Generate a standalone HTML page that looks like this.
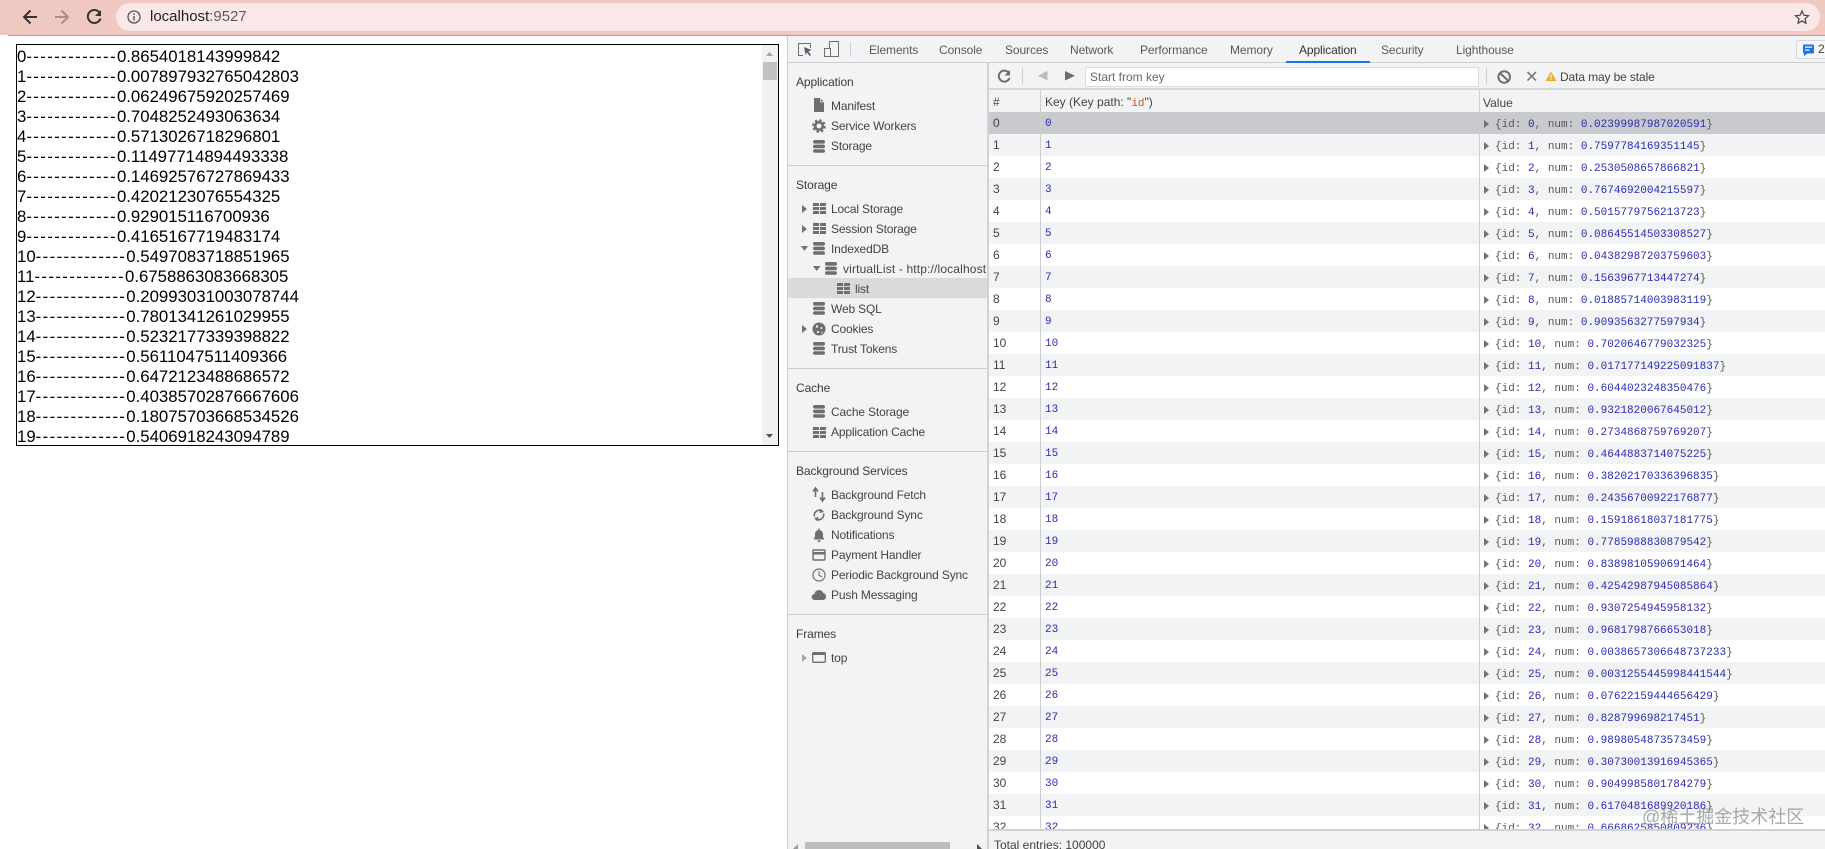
<!DOCTYPE html>
<html><head><meta charset="utf-8"><title>localhost:9527</title>
<style>
*{box-sizing:border-box}
html,body{margin:0;padding:0;width:1825px;height:849px;overflow:hidden;background:#fff;font-family:"Liberation Sans",sans-serif}
.a{position:absolute}
#bar{left:0;top:0;width:1825px;height:35px;background:#efc8c1}
#line{left:8px;top:35px;width:1817px;height:1px;background:#b89e99}
#omni{left:116px;top:3px;width:1704px;height:28px;border-radius:14px;background:#f9e8e7}
#url{left:150px;top:8px;font-size:15px;line-height:18px;color:#202124}
#url span{color:#5f5a5a}
#box{left:16px;top:44px;width:763px;height:402px;border:1px solid #000;overflow:hidden;background:#fff}
#list{position:absolute;left:0;top:2px;font-size:16.8px;line-height:20px;color:#000;white-space:nowrap}
#list div{height:20px}
#list span{letter-spacing:1.38px}
#sb{position:absolute;right:0;top:0;width:16px;height:400px;background:#f1f1f1}
#th{position:absolute;right:1px;top:17px;width:14px;height:18px;background:#c1c1c1}
#dev{left:787px;top:36px;width:1038px;height:813px;background:#f1f3f4;border-left:1px solid #cbcdd1}
.tab{position:absolute;top:42px;font-size:12px;line-height:16px;color:#5a5a5a;white-space:nowrap;letter-spacing:-.1px}
#tabline{left:788px;top:62px;width:1037px;height:1px;background:#cbcdd1}
#under{left:1286px;top:61px;width:84px;height:2px;background:#1a73e8}
#side{left:987px;top:63px;width:2px;height:786px;background:#d0d2d6}
.d{position:absolute;left:788px;width:199px;height:1px;background:#cbcdd1}
.h,.t{position:absolute;font-size:12px;line-height:16px;height:16px;white-space:nowrap;color:#444}
.h{left:796px;color:#3c3c3c;letter-spacing:-.1px}
.t{left:831px;letter-spacing:-.16px}
#sel{left:788px;top:278px;width:199px;height:20px;background:#dadada}
#vl{left:843px;width:143px;overflow:hidden;letter-spacing:.15px}
#inp{left:1085px;top:67px;width:394px;height:20px;background:#fff;border:1px solid #dadce0;font-size:12px;line-height:18px;color:#6a6a6a;padding-left:4px}
#tb2{left:989px;top:88px;width:836px;height:2px;background:#d5d7da}
#hd{left:989px;top:90px;width:836px;height:22px;background:#f1f3f4}
#grid{left:989px;top:112px;width:836px;height:717px;overflow:hidden;background:#fff}
.r{position:relative;height:22px;font-size:12px;line-height:22px;color:#444;white-space:nowrap}
.r:nth-child(even){background:#f1f3f4}
.r.s{background:#c8cacd}
.r b,.r i,.r u{position:absolute;font-weight:normal;font-style:normal;text-decoration:none}
.r b{left:4px;font-size:12px;top:0}
.r i{left:56px;font-family:"Liberation Mono",monospace;font-size:11px;color:#2a2ab0;top:1px}
.r u{left:506px;top:2px;font-family:"Liberation Mono",monospace;font-size:11px;color:#565656}
.r u em{font-style:normal;color:#2a2ab0}
.r s{position:absolute;left:495px;top:8px;width:0;height:0;border-left:5px solid #727272;border-top:4px solid transparent;border-bottom:4px solid transparent}
.cv{position:absolute;top:90px;width:1px;height:739px;background:#cbcdd1}
#foot{left:989px;top:829px;width:836px;height:20px;background:#f1f3f4;border-top:2px solid #d0d2d6;font-size:12px;line-height:29px;color:#444;padding-left:5px;overflow:hidden}
.hh{position:absolute;top:94px;font-size:12px;line-height:16px;color:#444;white-space:nowrap}
.hh span{font-family:"Liberation Mono",monospace;font-size:11px;color:#c5571f}
#badge{left:1796px;top:40px;width:29px;height:19px;border:1px solid #d6d8db;border-right:0;border-radius:2px 0 0 2px;background:#f5f6f7;font-size:12px;line-height:17px;color:#444;padding-left:21px}
#wm{left:1642px;top:805px;font-family:"Liberation Sans","Noto Sans CJK SC",sans-serif;font-size:18px;line-height:24px;color:rgba(140,140,140,.75);white-space:nowrap}
svg.a{left:0;top:0;pointer-events:none}
</style></head><body>
<div class="a" id="bar"></div><div class="a" id="line"></div><div class="a" id="omni"></div>
<div class="a" id="url">localhost<span>:9527</span></div>

<div class="a" id="box">
<div id="list">
<div>0<span>-------------</span>0.8654018143999842</div>
<div>1<span>-------------</span>0.007897932765042803</div>
<div>2<span>-------------</span>0.06249675920257469</div>
<div>3<span>-------------</span>0.7048252493063634</div>
<div>4<span>-------------</span>0.5713026718296801</div>
<div>5<span>-------------</span>0.11497714894493338</div>
<div>6<span>-------------</span>0.14692576727869433</div>
<div>7<span>-------------</span>0.4202123076554325</div>
<div>8<span>-------------</span>0.929015116700936</div>
<div>9<span>-------------</span>0.4165167719483174</div>
<div>10<span>-------------</span>0.5497083718851965</div>
<div>11<span>-------------</span>0.6758863083668305</div>
<div>12<span>-------------</span>0.20993031003078744</div>
<div>13<span>-------------</span>0.7801341261029955</div>
<div>14<span>-------------</span>0.5232177339398822</div>
<div>15<span>-------------</span>0.5611047511409366</div>
<div>16<span>-------------</span>0.6472123488686572</div>
<div>17<span>-------------</span>0.40385702876667606</div>
<div>18<span>-------------</span>0.18075703668534526</div>
<div>19<span>-------------</span>0.5406918243094789</div>
</div>
<div id="sb"><div id="th"></div></div>
</div>

<div class="a" id="dev"></div>
<div class="a" id="tabline"></div>
<div class="tab" style="left:869px">Elements</div>
<div class="tab" style="left:939px">Console</div>
<div class="tab" style="left:1005px">Sources</div>
<div class="tab" style="left:1070px">Network</div>
<div class="tab" style="left:1140px">Performance</div>
<div class="tab" style="left:1230px">Memory</div>
<div class="tab" style="left:1299px;color:#333">Application</div>
<div class="tab" style="left:1381px">Security</div>
<div class="tab" style="left:1456px">Lighthouse</div>
<div class="a" id="under"></div>
<div class="a" id="badge">2</div>

<div class="a" id="side"></div>
<div class="a" id="sel"></div>
<div class="d" style="top:165px"></div>
<div class="d" style="top:368px"></div>
<div class="d" style="top:451px"></div>
<div class="d" style="top:614px"></div>

<div class="h" style="top:74px">Application</div>
<div class="t" style="top:98px">Manifest</div>
<div class="t" style="top:118px">Service Workers</div>
<div class="t" style="top:138px">Storage</div>
<div class="h" style="top:177px">Storage</div>
<div class="t" style="top:201px">Local Storage</div>
<div class="t" style="top:221px">Session Storage</div>
<div class="t" style="top:241px">IndexedDB</div>
<div class="t" id="vl" style="top:261px">virtualList - http://localhost</div>
<div class="t" style="top:281px;left:855px">list</div>
<div class="t" style="top:301px">Web SQL</div>
<div class="t" style="top:321px">Cookies</div>
<div class="t" style="top:341px">Trust Tokens</div>
<div class="h" style="top:380px">Cache</div>
<div class="t" style="top:404px">Cache Storage</div>
<div class="t" style="top:424px">Application Cache</div>
<div class="h" style="top:463px">Background Services</div>
<div class="t" style="top:487px">Background Fetch</div>
<div class="t" style="top:507px">Background Sync</div>
<div class="t" style="top:527px">Notifications</div>
<div class="t" style="top:547px">Payment Handler</div>
<div class="t" style="top:567px">Periodic Background Sync</div>
<div class="t" style="top:587px">Push Messaging</div>
<div class="h" style="top:626px">Frames</div>
<div class="t" style="top:650px">top</div>

<div class="a" style="left:788px;top:842px;width:199px;height:7px;background:#f1f1f1"></div>
<div class="a" style="left:805px;top:842px;width:145px;height:7px;background:#bdbdbd"></div>

<div class="a" id="inp">Start from key</div>
<div class="a" style="left:1560px;top:69px;font-size:12px;line-height:16px;color:#444;letter-spacing:-.12px">Data may be stale</div>
<div class="a" id="tb2"></div>
<div class="a" id="hd"></div>
<div class="hh" style="left:993px">#</div>
<div class="hh" style="left:1045px">Key (Key path: "<span>id</span>")</div>
<div class="hh" style="left:1483px;top:95px">Value</div>

<div class="a" id="grid">
<div class="r s"><b>0</b><i>0</i><s></s><u>{id: <em>0</em>, num: <em>0.02399987987020591</em>}</u></div>
<div class="r"><b>1</b><i>1</i><s></s><u>{id: <em>1</em>, num: <em>0.7597784169351145</em>}</u></div>
<div class="r"><b>2</b><i>2</i><s></s><u>{id: <em>2</em>, num: <em>0.2530508657866821</em>}</u></div>
<div class="r"><b>3</b><i>3</i><s></s><u>{id: <em>3</em>, num: <em>0.7674692004215597</em>}</u></div>
<div class="r"><b>4</b><i>4</i><s></s><u>{id: <em>4</em>, num: <em>0.5015779756213723</em>}</u></div>
<div class="r"><b>5</b><i>5</i><s></s><u>{id: <em>5</em>, num: <em>0.08645514503308527</em>}</u></div>
<div class="r"><b>6</b><i>6</i><s></s><u>{id: <em>6</em>, num: <em>0.04382987203759603</em>}</u></div>
<div class="r"><b>7</b><i>7</i><s></s><u>{id: <em>7</em>, num: <em>0.1563967713447274</em>}</u></div>
<div class="r"><b>8</b><i>8</i><s></s><u>{id: <em>8</em>, num: <em>0.01885714003983119</em>}</u></div>
<div class="r"><b>9</b><i>9</i><s></s><u>{id: <em>9</em>, num: <em>0.9093563277597934</em>}</u></div>
<div class="r"><b>10</b><i>10</i><s></s><u>{id: <em>10</em>, num: <em>0.7020646779032325</em>}</u></div>
<div class="r"><b>11</b><i>11</i><s></s><u>{id: <em>11</em>, num: <em>0.017177149225091837</em>}</u></div>
<div class="r"><b>12</b><i>12</i><s></s><u>{id: <em>12</em>, num: <em>0.6044023248350476</em>}</u></div>
<div class="r"><b>13</b><i>13</i><s></s><u>{id: <em>13</em>, num: <em>0.9321820067645012</em>}</u></div>
<div class="r"><b>14</b><i>14</i><s></s><u>{id: <em>14</em>, num: <em>0.2734868759769207</em>}</u></div>
<div class="r"><b>15</b><i>15</i><s></s><u>{id: <em>15</em>, num: <em>0.4644883714075225</em>}</u></div>
<div class="r"><b>16</b><i>16</i><s></s><u>{id: <em>16</em>, num: <em>0.38202170336396835</em>}</u></div>
<div class="r"><b>17</b><i>17</i><s></s><u>{id: <em>17</em>, num: <em>0.24356700922176877</em>}</u></div>
<div class="r"><b>18</b><i>18</i><s></s><u>{id: <em>18</em>, num: <em>0.15918618037181775</em>}</u></div>
<div class="r"><b>19</b><i>19</i><s></s><u>{id: <em>19</em>, num: <em>0.7785988830879542</em>}</u></div>
<div class="r"><b>20</b><i>20</i><s></s><u>{id: <em>20</em>, num: <em>0.8389810590691464</em>}</u></div>
<div class="r"><b>21</b><i>21</i><s></s><u>{id: <em>21</em>, num: <em>0.42542987945085864</em>}</u></div>
<div class="r"><b>22</b><i>22</i><s></s><u>{id: <em>22</em>, num: <em>0.9307254945958132</em>}</u></div>
<div class="r"><b>23</b><i>23</i><s></s><u>{id: <em>23</em>, num: <em>0.9681798766653018</em>}</u></div>
<div class="r"><b>24</b><i>24</i><s></s><u>{id: <em>24</em>, num: <em>0.0038657306648737233</em>}</u></div>
<div class="r"><b>25</b><i>25</i><s></s><u>{id: <em>25</em>, num: <em>0.0031255445998441544</em>}</u></div>
<div class="r"><b>26</b><i>26</i><s></s><u>{id: <em>26</em>, num: <em>0.07622159444656429</em>}</u></div>
<div class="r"><b>27</b><i>27</i><s></s><u>{id: <em>27</em>, num: <em>0.828799698217451</em>}</u></div>
<div class="r"><b>28</b><i>28</i><s></s><u>{id: <em>28</em>, num: <em>0.9898054873573459</em>}</u></div>
<div class="r"><b>29</b><i>29</i><s></s><u>{id: <em>29</em>, num: <em>0.30730013916945365</em>}</u></div>
<div class="r"><b>30</b><i>30</i><s></s><u>{id: <em>30</em>, num: <em>0.9049985801784279</em>}</u></div>
<div class="r"><b>31</b><i>31</i><s></s><u>{id: <em>31</em>, num: <em>0.6170481689920186</em>}</u></div>
<div class="r"><b>32</b><i>32</i><s></s><u>{id: <em>32</em>, num: <em>0.6668625850809236</em>}</u></div>
</div>
<div class="cv" style="left:1040px"></div>
<div class="cv" style="left:1479px"></div>
<div class="a" id="foot">Total entries: 100000</div>
<div class="a" id="wm">@稀土掘金技术社区</div>

<svg class="a" width="1825" height="849" viewBox="0 0 1825 849" xmlns="http://www.w3.org/2000/svg">
<defs>
<symbol id="db" viewBox="0 0 12 13"><g fill="#6e6e6e"><rect x="0" y="0" width="12" height="3.6" rx="1.8"/><rect x="0" y="4.6" width="12" height="3.6" rx="1.8"/><rect x="0" y="9.2" width="12" height="3.6" rx="1.8"/></g></symbol>
<symbol id="gr" viewBox="0 0 13 11"><g fill="#6e6e6e"><rect x="0" y="0" width="6" height="3"/><rect x="7" y="0" width="6" height="3"/><rect x="0" y="4" width="6" height="3"/><rect x="7" y="4" width="6" height="3"/><rect x="0" y="8" width="6" height="3"/><rect x="7" y="8" width="6" height="3"/></g></symbol>
</defs>
<!-- browser toolbar -->
<g fill="none" stroke-width="2">
<path d="M37 17H25M30.5 10.5L24 17L30.5 23.5" stroke="#333"/>
<path d="M55 17H67M61.5 10.5L68 17L61.5 23.5" stroke="#a68e8a"/>
<path d="M99.5 12.5A6.5 6.5 0 1 0 100.5 18.5" stroke="#333"/>
</g>
<polygon points="101,10 101,16 95,16" fill="#333"/>
<circle cx="134" cy="17" r="6" fill="none" stroke="#555" stroke-width="1.3"/>
<rect x="133.3" y="16" width="1.4" height="4.5" fill="#555"/><rect x="133.3" y="13.3" width="1.4" height="1.5" fill="#555"/>
<polygon points="1802,11 1803.9,15.2 1808.5,15.7 1805,18.8 1806,23.3 1802,21 1798,23.3 1799,18.8 1795.5,15.7 1800.1,15.2" fill="none" stroke="#444" stroke-width="1.2"/>
<!-- page scrollbar arrows -->
<polygon points="769.5,52 773,56 766,56" fill="#a3a3a3"/>
<polygon points="766,434 773,434 769.5,438" fill="#505050"/>
<!-- devtools tab icons -->
<path d="M803 55.5H798.5V43.5H810.5V48" fill="none" stroke="#6e6e6e"/>
<polygon points="804,47 811.5,50 808.5,51.5 811,55 809.5,56 807,52.5 805.5,55" fill="#5f6368"/>
<rect x="829.5" y="41.5" width="9" height="15" fill="none" stroke="#6e6e6e"/>
<rect x="824.5" y="48.5" width="6" height="8" fill="#f1f3f4" stroke="#6e6e6e"/>
<rect x="850" y="42" width="1" height="15" fill="#cbcdd1"/>
<rect x="1803" y="44.5" width="11" height="9" rx="1" fill="#1a73e8"/><polygon points="1804,53 1808,53 1804,56" fill="#1a73e8"/>
<rect x="1805" y="46.5" width="7" height="1.2" fill="#fff"/><rect x="1805" y="49.5" width="4.5" height="1.2" fill="#fff"/>
<!-- app toolbar -->
<path d="M1008.5 72.5A5.5 5.5 0 1 0 1009.5 78" fill="none" stroke="#6e6e6e" stroke-width="2"/>
<polygon points="1010,70 1010,75.5 1004.5,75.5" fill="#6e6e6e"/>
<rect x="1022" y="68" width="1" height="16" fill="#cbcdd1"/>
<polygon points="1047.5,71 1047.5,80.5 1038,75.8" fill="#bcbcbc"/>
<polygon points="1065,71 1065,80.5 1075,75.8" fill="#6e6e6e"/>
<rect x="1486" y="68" width="1" height="16" fill="#cbcdd1"/>
<circle cx="1504.2" cy="77" r="5.8" fill="none" stroke="#6e6e6e" stroke-width="2"/>
<path d="M1500 73L1508.4 81" stroke="#6e6e6e" stroke-width="2"/>
<path d="M1527.5 72L1536 80.5M1536 72L1527.5 80.5" stroke="#6e6e6e" stroke-width="1.5"/>
<polygon points="1551,71.5 1556.5,81 1545.5,81" fill="#f2ab26"/>
<rect x="1550.4" y="74.5" width="1.2" height="3.3" fill="#fff"/><rect x="1550.4" y="78.5" width="1.2" height="1.2" fill="#fff"/>
<!-- sidebar icons -->
<path d="M814 98h6l4 4v10h-10z" fill="#6e6e6e"/><path d="M820.5 98.5v3.5h3.5" fill="none" stroke="#f1f3f4" stroke-width=".7"/>
<circle cx="819" cy="126" r="3.8" fill="none" stroke="#6e6e6e" stroke-width="2.6"/>
<circle cx="819" cy="126" r="5.9" fill="none" stroke="#6e6e6e" stroke-width="1.8" stroke-dasharray="2.6 2.03"/>
<use href="#db" x="813" y="140" width="12" height="13"/>
<polygon points="802,205 807,209 802,213" fill="#727272"/>
<use href="#gr" x="813" y="203" width="13" height="11"/>
<polygon points="802,225 807,229 802,233" fill="#727272"/>
<use href="#gr" x="813" y="223" width="13" height="11"/>
<polygon points="801,246 808,246 804.5,251" fill="#727272"/>
<use href="#db" x="813" y="242" width="12" height="13"/>
<polygon points="813,266 820.5,266 816.7,271" fill="#727272"/>
<use href="#db" x="825" y="262" width="12" height="13"/>
<use href="#gr" x="837" y="283" width="13" height="11"/>
<use href="#db" x="813" y="302" width="12" height="13"/>
<polygon points="802,325 807,329 802,333" fill="#727272"/>
<circle cx="819" cy="329" r="6.5" fill="#6e6e6e"/><circle cx="817" cy="326.5" r="1.2" fill="#f1f3f4"/><circle cx="821.5" cy="328" r="1" fill="#f1f3f4"/><circle cx="818" cy="332" r="1.1" fill="#f1f3f4"/><circle cx="822" cy="332.5" r=".8" fill="#f1f3f4"/>
<use href="#db" x="813" y="342" width="12" height="13"/>
<use href="#db" x="813" y="405" width="12" height="13"/>
<use href="#gr" x="813" y="427" width="13" height="11"/>
<path d="M815.5 497V489M813 491.5L815.5 488L818 491.5" fill="none" stroke="#6e6e6e" stroke-width="1.6"/>
<path d="M822.5 492V500M820 497.5L822.5 501L825 497.5" fill="none" stroke="#6e6e6e" stroke-width="1.6"/>
<path d="M814.5 516.5A5 5 0 0 1 822 511M823.5 513.5A5 5 0 0 1 816 519" fill="none" stroke="#6e6e6e" stroke-width="1.6"/>
<polygon points="820.5,508.5 824,512 819.5,513" fill="#6e6e6e"/><polygon points="817.5,521.5 814,518 818.5,517" fill="#6e6e6e"/>
<path d="M814 539.5v-1l1-1.5v-3a4 4 0 0 1 8 0v3l1 1.5v1z" fill="#6e6e6e"/><rect x="817.5" y="540.3" width="3" height="1.7" rx=".8" fill="#6e6e6e"/><rect x="818.3" y="528.5" width="1.4" height="2" fill="#6e6e6e"/>
<rect x="813" y="550" width="12" height="10" rx="1" fill="none" stroke="#6e6e6e" stroke-width="1.4"/><rect x="813" y="552" width="12" height="2.5" fill="#6e6e6e"/>
<circle cx="819" cy="575" r="6" fill="none" stroke="#6e6e6e" stroke-width="1.2"/><path d="M819 571v4.2l3 1.8" fill="none" stroke="#6e6e6e" stroke-width="1.1"/>
<path d="M815 600a3 3 0 0 1-.5-6a4.6 4.6 0 0 1 8.8-1a3.6 3.6 0 0 1 0 7z" fill="#6e6e6e"/>
<polygon points="802,654 807,658 802,662" fill="#a8a8a8"/>
<rect x="812.7" y="652.7" width="12.6" height="9.6" rx="1" fill="none" stroke="#6e6e6e" stroke-width="1.3"/><rect x="813" y="653" width="12" height="2" fill="#6e6e6e"/>
<polygon points="798,844 798,849 793,849" fill="#9a9a9a"/>
<polygon points="977,844 977,849 982,849" fill="#505050"/>
</svg>
</body></html>
